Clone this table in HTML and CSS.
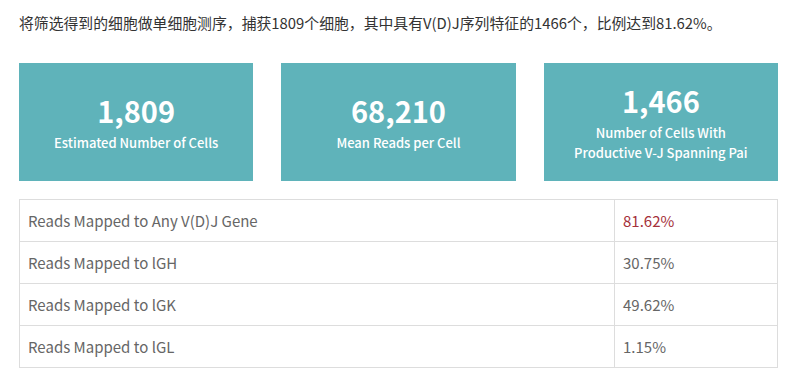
FILE: index.html
```html
<!DOCTYPE html>
<html lang="zh">
<head>
<meta charset="utf-8">
<link rel="stylesheet" href="styles.css">
</head>
<body>
<p class="intro">将筛选得到的细胞做单细胞测序，捕获1809个细胞，其中具有V(D)J序列特征的1466个，比例达到81.62%。</p>
<div class="cards">
  <div class="card">
    <div class="num">1,809</div>
    <div class="label">Estimated Number of Cells</div>
  </div>
  <div class="card">
    <div class="num">68,210</div>
    <div class="label">Mean Reads per Cell</div>
  </div>
  <div class="card">
    <div class="num">1,466</div>
    <div class="label">Number of Cells With<br>Productive V-J Spanning Pai</div>
  </div>
</div>
<table class="stats">
  <tr><td>Reads Mapped to Any V(D)J Gene</td><td class="val red">81.62%</td></tr>
  <tr><td>Reads Mapped to lGH</td><td class="val">30.75%</td></tr>
  <tr><td>Reads Mapped to lGK</td><td class="val">49.62%</td></tr>
  <tr><td>Reads Mapped to lGL</td><td class="val">1.15%</td></tr>
</table>
</body>
</html>
```
FILE: styles.css
```css
html, body {
  margin: 0;
  padding: 0;
  background: #fff;
}
body {
  font-family: "Noto Sans CJK SC", "Noto Sans", sans-serif;
  color: #333;
  padding: 0 14px 0 19px;
}
.intro {
  margin: 0;
  padding-top: 12px;
  font-size: 14.85px;
  line-height: 22px;
  height: 63px;
  box-sizing: border-box;
}
.cards {
  display: grid;
  grid-template-columns: repeat(3, 1fr);
  column-gap: 28px;
}
.card {
  background: #5fb3ba;
  color: #fff;
  height: 118px;
  display: flex;
  flex-direction: column;
  align-items: center;
  justify-content: center;
  text-align: center;
}
.num {
  font-size: 29px;
  font-weight: 700;
  line-height: 36px;
  margin-bottom: 5px;
}
.label {
  font-size: 13px;
  line-height: 20px;
  font-weight: 500;
}
.stats {
  margin-top: 18px;
  width: 100%;
  border-collapse: collapse;
  font-size: 15px;
  color: #666;
}
.stats td {
  border: 1px solid #ddd;
  height: 42px;
  padding: 0 0 0 8px;
  box-sizing: border-box;
}
.stats td.val {
  width: 163px;
}
.stats td.red {
  color: #a5303a;
}
```
